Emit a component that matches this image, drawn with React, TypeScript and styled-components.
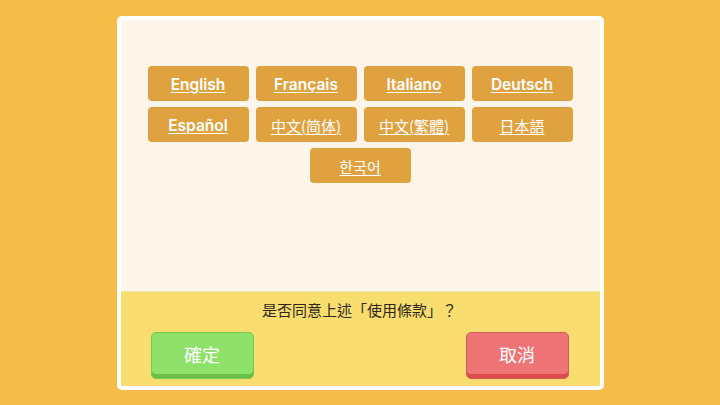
import React from 'react';
import styled, { createGlobalStyle } from 'styled-components';

const languages = [
  { label: 'English', cjk: false },
  { label: 'Français', cjk: false },
  { label: 'Italiano', cjk: false },
  { label: 'Deutsch', cjk: false },
  { label: 'Español', cjk: false },
  { label: '中文(简体)', cjk: true },
  { label: '中文(繁體)', cjk: true },
  { label: '日本語', cjk: true },
  { label: '한국어', cjk: true },
];

const App: React.FC = () => {
  return (
    <>
      <GlobalStyle />
      <Screen>
        <Dialog>
          <LanguageArea>
            <LanguageGrid>
              {languages.map((lang) => (
                <LanguageButton key={lang.label} $cjk={lang.cjk}>
                  {lang.label}
                </LanguageButton>
              ))}
            </LanguageGrid>
          </LanguageArea>
          <Footer>
            <Question>是否同意上述「使用條款」？</Question>
            <Actions>
              <ActionButton $variant="confirm">確定</ActionButton>
              <ActionButton $variant="cancel">取消</ActionButton>
            </Actions>
          </Footer>
        </Dialog>
      </Screen>
    </>
  );
};

export default App;

const GlobalStyle = createGlobalStyle`
  html, body {
    margin: 0;
    padding: 0;
    background: #f5bd47;
  }
  body {
    font-family: Inter, 'Noto Sans CJK TC', 'Noto Sans CJK KR', sans-serif;
  }
`;

const Screen = styled.div`
  width: 720px;
  height: 405px;
  display: flex;
  align-items: center;
  justify-content: center;
  background: #f5bd47;
`;

const Dialog = styled.div`
  width: 479px;
  height: 366px;
  border: 4px solid #ffffff;
  border-radius: 5px;
  background: #fdf5e9;
  display: flex;
  flex-direction: column;
  overflow: hidden;
`;

const LanguageArea = styled.div`
  flex: 1;
  padding-top: 46px;
  display: flex;
  justify-content: center;
  align-items: flex-start;
`;

const LanguageGrid = styled.div`
  width: 425px;
  display: flex;
  flex-wrap: wrap;
  justify-content: center;
  column-gap: 7px;
  row-gap: 6px;
`;

const LanguageButton = styled.button<{ $cjk: boolean }>`
  width: 101px;
  height: 35px;
  border: none;
  border-radius: 4px;
  background: #e0a23f;
  color: #ffffff;
  font-family: ${({ $cjk }) =>
    $cjk
      ? "'Noto Sans CJK TC', 'Noto Sans CJK KR', sans-serif"
      : 'Inter, sans-serif'};
  font-size: ${({ $cjk }) => ($cjk ? '15px' : '15.5px')};
  font-weight: ${({ $cjk }) => ($cjk ? 400 : 600)};
  text-decoration: underline;
  text-decoration-thickness: 1px;
  text-underline-offset: 2px;
  padding: 2px 0 0;
  cursor: pointer;
`;

const Footer = styled.div`
  height: 95px;
  box-sizing: border-box;
  background: #f9de6f;
  border-top: 1px solid #f3e3b0;
  padding: 8px 31px 7px 30px;
  display: flex;
  flex-direction: column;
`;

const Question = styled.div`
  text-align: center;
  font-family: 'Noto Sans CJK TC', sans-serif;
  font-size: 15px;
  font-weight: 400;
  line-height: 20px;
  color: #2e271d;
`;

const Actions = styled.div`
  margin-top: 12px;
  display: flex;
  justify-content: space-between;
`;

const ActionButton = styled.button<{ $variant: 'confirm' | 'cancel' }>`
  width: 103px;
  height: 47px;
  border-radius: 5px;
  border: 1px solid
    ${({ $variant }) => ($variant === 'confirm' ? '#74c94f' : '#dd5a58')};
  background: ${({ $variant }) =>
    $variant === 'confirm' ? '#8ee26a' : '#ef7476'};
  box-shadow: inset 0 -4px 0
    ${({ $variant }) => ($variant === 'confirm' ? '#68be46' : '#d94c4b')};
  color: #ffffff;
  font-family: 'Noto Sans CJK TC', sans-serif;
  font-size: 18px;
  padding: 0 0 3px;
  cursor: pointer;
`;
